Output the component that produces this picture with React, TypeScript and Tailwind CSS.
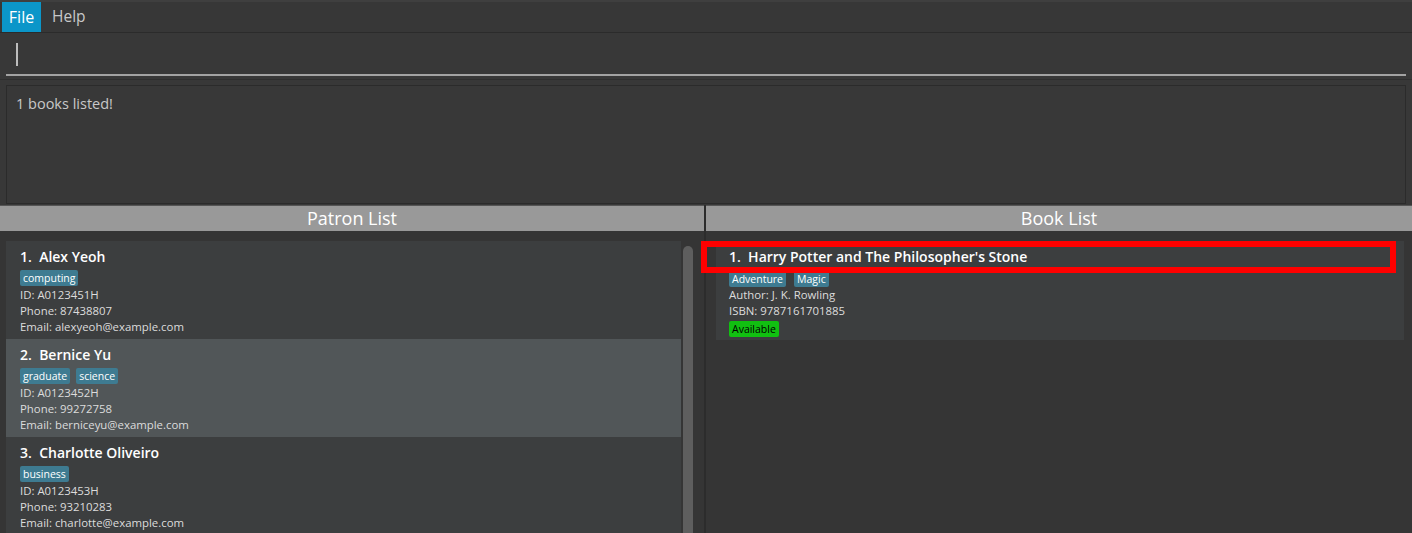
const font = { fontFamily: '"Open Sans", "Noto Sans", sans-serif' }

type Patron = { name: string; tags: string[]; id: string; phone: string; email: string }

const patrons: Patron[] = [
    { name: "Alex Yeoh", tags: ["computing"], id: "A0123451H", phone: "87438807", email: "alexyeoh@example.com" },
    { name: "Bernice Yu", tags: ["graduate", "science"], id: "A0123452H", phone: "99272758", email: "berniceyu@example.com" },
    { name: "Charlotte Oliveiro", tags: ["business"], id: "A0123453H", phone: "93210283", email: "charlotte@example.com" },
]

function Tag({ label }: { label: string }) {
    return (
        <span className="h-[16px] px-[3px] rounded-[2px] bg-[#3e7b91] text-[10.5px] leading-[16px] text-white">
            {label}
        </span>
    )
}

function PatronCard({ patron, index }: { patron: Patron; index: number }) {
    const bg = index % 2 === 0 ? "bg-[#3c3e3f]" : "bg-[#515658]"
    return (
        <div className={"shrink-0 h-[98px] pl-[14px] pt-[6px] " + bg}>
            <div className="h-[20px] leading-[20px] text-[14px] font-semibold text-white whitespace-pre">
                {index + 1}.  {patron.name}
            </div>
            <div className="mt-[3px] flex gap-[6px]">
                {patron.tags.map((t) => (
                    <Tag key={t} label={t} />
                ))}
            </div>
            <div className="pt-[1px] text-[11.4px] leading-[16px] text-[#dcdcdc]">
                <div>ID: {patron.id}</div>
                <div>Phone: {patron.phone}</div>
                <div>Email: {patron.email}</div>
            </div>
        </div>
    )
}

function PanelHeader({ title }: { title: string }) {
    return (
        <div className="h-[26px] border-t border-[#555555] bg-[#999999] flex items-center justify-center text-[18px] font-medium text-white">
            {title}
        </div>
    )
}

export default function App() {
    return (
        <div className="relative w-[1412px] h-[533px] overflow-hidden bg-[#383838] flex flex-col" style={font}>
            <div className="h-[2px] bg-[#3f3f3f]" />

            {/* MENU BAR */}
            <div className="h-[31px] flex border-b border-[#2b2b2b] bg-[#373737]">
                <div className="ml-[2px] w-[39px] bg-[#0b96c9] text-white text-[16px] flex items-center justify-center">
                    File
                </div>
                <div className="ml-[11px] text-[#c8c8c8] text-[15.5px] flex items-center">Help</div>
            </div>

            {/* COMMAND BOX */}
            <div className="h-[47px] px-[6px] border-b border-[#2f2f2f] flex flex-col">
                <div className="h-[41px] pl-[10px] flex items-center">
                    <div className="w-[2px] h-[23px] bg-[#bdbdbd] mt-[2px]" />
                </div>
                <div className="h-[2px] bg-[#a3a3a3]" />
            </div>

            {/* RESULT DISPLAY */}
            <div className="h-[125px] pt-[5px] px-[6px]">
                <div className="h-[119px] border border-[#2b2b2b] bg-[#383838] pl-[9px] pt-[7px] text-[14.5px] text-[#c8c8c8]">
                    1 books listed!
                </div>
            </div>

            {/* LISTS */}
            <div className="flex-1 flex min-h-0">
                <div className="w-[704px] flex flex-col">
                    <PanelHeader title="Patron List" />
                    <div className="flex-1 min-h-0 flex pt-[10px] pl-[6px] bg-[#353535]">
                        <div className="w-[675px] flex flex-col overflow-hidden">
                            {patrons.map((p, i) => (
                                <PatronCard key={p.id} patron={p} index={i} />
                            ))}
                        </div>
                        <div className="ml-[2px] mt-[5px] w-[10px] h-[400px] rounded-[5px] bg-[#5e5e5e]" />
                    </div>
                </div>
                <div className="w-[2px] bg-[#2c2c2c]" />
                <div className="flex-1 flex flex-col">
                    <PanelHeader title="Book List" />
                    <div className="flex-1 pt-[10px] pl-[10px] pr-[8px] bg-[#353535]">
                        <div className="h-[99px] pl-[13px] pt-[6px] bg-[#3c3e3f]">
                            <div className="h-[20px] leading-[20px] text-[14px] font-semibold text-white whitespace-pre">
                                1.  Harry Potter and The Philosopher's Stone
                            </div>
                            <div className="mt-[4px] flex gap-[8px]">
                                <Tag label="Adventure" />
                                <Tag label="Magic" />
                            </div>
                            <div className="text-[11.4px] leading-[16px] text-[#dcdcdc]">
                                <div>Author: J. K. Rowling</div>
                                <div>ISBN: 9787161701885</div>
                            </div>
                            <div className="mt-[2px] flex">
                                <span className="h-[16px] px-[3px] rounded-[2px] bg-[#11c011] text-[10.5px] leading-[16px] text-black">
                                    Available
                                </span>
                            </div>
                        </div>
                    </div>
                </div>
            </div>

            {/* annotation highlight */}
            <div className="absolute left-[701px] top-[241px] w-[695px] h-[32px] border-[6px] border-[#ff0000]" />
        </div>
    )
}
